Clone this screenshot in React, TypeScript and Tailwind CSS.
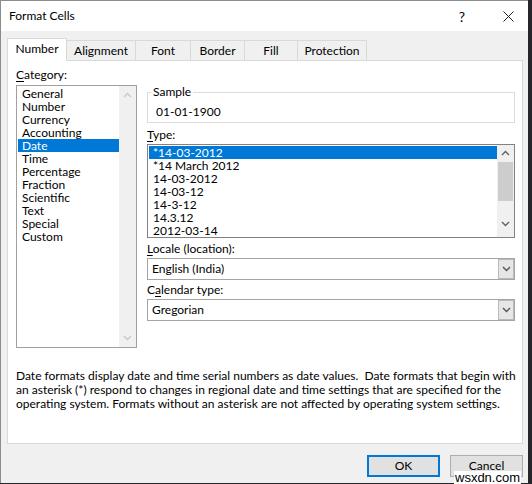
import React from "react";

const font = { fontFamily: 'Lato, "Noto Sans", sans-serif' };

function Up({ color = "#606060" }: { color?: string }) {
  return (
    <svg width="9" height="6" viewBox="0 0 9 6">
      <polyline points="1,5 4.5,1.5 8,5" fill="none" stroke={color} strokeWidth="1.4" />
    </svg>
  );
}
function Down({ color = "#606060" }: { color?: string }) {
  return (
    <svg width="9" height="6" viewBox="0 0 9 6">
      <polyline points="1,1 4.5,4.5 8,1" fill="none" stroke={color} strokeWidth="1.4" />
    </svg>
  );
}

const categories = [
  "General",
  "Number",
  "Currency",
  "Accounting",
  "Date",
  "Time",
  "Percentage",
  "Fraction",
  "Scientific",
  "Text",
  "Special",
  "Custom",
];

const types = [
  "*14-03-2012",
  "*14 March 2012",
  "14-03-2012",
  "14-03-12",
  "14-3-12",
  "14.3.12",
  "2012-03-14",
];

const tabs = [
  { label: "Alignment", w: "w-[69px]" },
  { label: "Font", w: "w-[55px]" },
  { label: "Border", w: "w-[54px]" },
  { label: "Fill", w: "w-[53px]" },
  { label: "Protection", w: "w-[69px]" },
];

function Dropdown({ value }: { value: string }) {
  return (
    <div className="flex h-[22px] w-[368px] items-stretch border border-[#a5a5a5] bg-white">
      <div className="flex flex-1 items-center pl-[4px] leading-[16px]">{value}</div>
      <div className="flex w-[16px] items-center justify-center border border-[#b9b9b9] bg-[#e6e6e6]">
        <Down color="#555" />
      </div>
    </div>
  );
}

export default function App() {
  return (
    <div className="relative h-[484px] w-[532px] overflow-hidden bg-[#26262a] text-[12px] text-black" style={font}>
      <div className="flex h-[483px] w-[528px] flex-col border-l border-t border-[#8c8c8c] bg-[#f0f0f0]">
        {/* Title bar */}
        <div className="flex h-[30px] items-center bg-white">
          <div className="flex-1 pl-[8px] text-[12px] leading-[16px]">Format Cells</div>
          <div className="flex h-full w-[52px] items-center justify-center text-[14px]">?</div>
          <div className="flex h-full w-[40px] items-center justify-center">
            <svg width="11" height="11" viewBox="0 0 11 11">
              <path d="M0.5 0.5 L10.5 10.5 M10.5 0.5 L0.5 10.5" stroke="#222" strokeWidth="1" />
            </svg>
          </div>
        </div>

        {/* Body */}
        <div className="flex flex-1 flex-col pl-[6px] pr-[5px]">
          {/* Tabs */}
          <div className="flex h-[29px] items-end">
            <div className="relative z-10 -mb-px flex h-[23px] w-[60px] items-center justify-center border-l border-r border-t border-[#d9d9d9] bg-white pb-[2px] leading-[16px]">
              Number
            </div>
            {tabs.map((t) => (
              <div
                key={t.label}
                className={`flex h-[20px] ${t.w} items-center justify-center border-r border-t border-[#d9d9d9] bg-[#f0f0f0] leading-[16px]`}
              >
                {t.label}
              </div>
            ))}
          </div>

          {/* Panel */}
          <div className="flex h-[384px] w-[516px] flex-col border border-[#d9d9d9] bg-white pl-[8px] pt-[6px]">
            <div className="flex gap-[10px]">
              {/* Left: category */}
              <div className="flex w-[121px] flex-col">
                <div className="h-[18px] leading-[16px]">
                  <span className="underline underline-offset-2">C</span>ategory:
                </div>
                <div className="flex h-[263px] border border-[#a0a0a0] bg-white">
                  <div className="flex-1 py-[1px] pl-[1px]">
                    {categories.map((c) => (
                      <div
                        key={c}
                        className={`h-[13px] pl-[4px] leading-[13px] ${
                          c === "Date" ? "bg-[#0078d7] text-white" : ""
                        }`}
                      >
                        {c}
                      </div>
                    ))}
                  </div>
                  <div className="flex w-[17px] flex-col items-center justify-between bg-[#f0f0f0] py-[6px]">
                    <Up color="#c8c8c8" />
                    <Down color="#c8c8c8" />
                  </div>
                </div>
              </div>

              {/* Right column */}
              <div className="flex w-[368px] flex-col">
                <fieldset className="mt-[17px] h-[39px] border border-[#dcdcdc] pl-[3px]">
                  <legend className="px-[2px] leading-[16px]">Sample</legend>
                  <div className="pl-[5px] pt-[4px] leading-[16px]">01-01-1900</div>
                </fieldset>

                <div className="mt-[4px] h-[17px] leading-[16px]">
                  <span className="underline underline-offset-2">T</span>ype:
                </div>
                <div className="flex h-[94px] border border-[#828282] bg-white">
                  <div className="flex-1 py-[1px] pl-[1px]">
                    {types.map((t, i) => (
                      <div
                        key={t}
                        className={`h-[13px] pl-[4px] leading-[13px] ${
                          i === 0 ? "bg-[#0078d7] text-white" : ""
                        }`}
                      >
                        {t}
                      </div>
                    ))}
                  </div>
                  <div className="flex w-[17px] flex-col items-center bg-[#f0f0f0] pt-[5px]">
                    <Up />
                    <div className="mt-[6px] h-[39px] w-[15px] bg-[#cdcdcd]" />
                    <div className="mt-[20px]">
                      <Down />
                    </div>
                  </div>
                </div>

                <div className="mt-[3px] h-[17px] leading-[16px]">
                  <span className="underline underline-offset-2">L</span>ocale (location):
                </div>
                <Dropdown value="English (India)" />

                <div className="mt-[2px] h-[17px] leading-[16px]">
                  C<span className="underline underline-offset-2">a</span>lendar type:
                </div>
                <Dropdown value="Gregorian" />
              </div>
            </div>

            <div className="mt-[21px] whitespace-nowrap leading-[14px]">
              Date formats display date and time serial numbers as date values.&nbsp; Date formats that begin with
              <br />
              an asterisk (*) respond to changes in regional date and time settings that are specified for the
              <br />
              operating system. Formats without an asterisk are not affected by operating system settings.
            </div>
          </div>

          {/* Buttons */}
          <div className="mt-[11px] flex justify-end gap-[10px]">
            <button className="flex h-[22px] w-[73px] items-center justify-center border-2 border-[#0078d7] bg-[#e1e1e1] leading-[16px]">
              OK
            </button>
            <button className="flex h-[22px] w-[73px] items-center justify-center border border-[#adadad] bg-[#e1e1e1] leading-[16px]">
              Cancel
            </button>
          </div>
        </div>
      </div>

      {/* watermark */}
      <div className="absolute left-[454px] top-[471px] bg-white px-[1px] text-[13px] leading-[13px]" style={{ fontFamily: '"Liberation Sans", Arial, sans-serif' }}>
        wsxdn.com
      </div>
    </div>
  );
}
